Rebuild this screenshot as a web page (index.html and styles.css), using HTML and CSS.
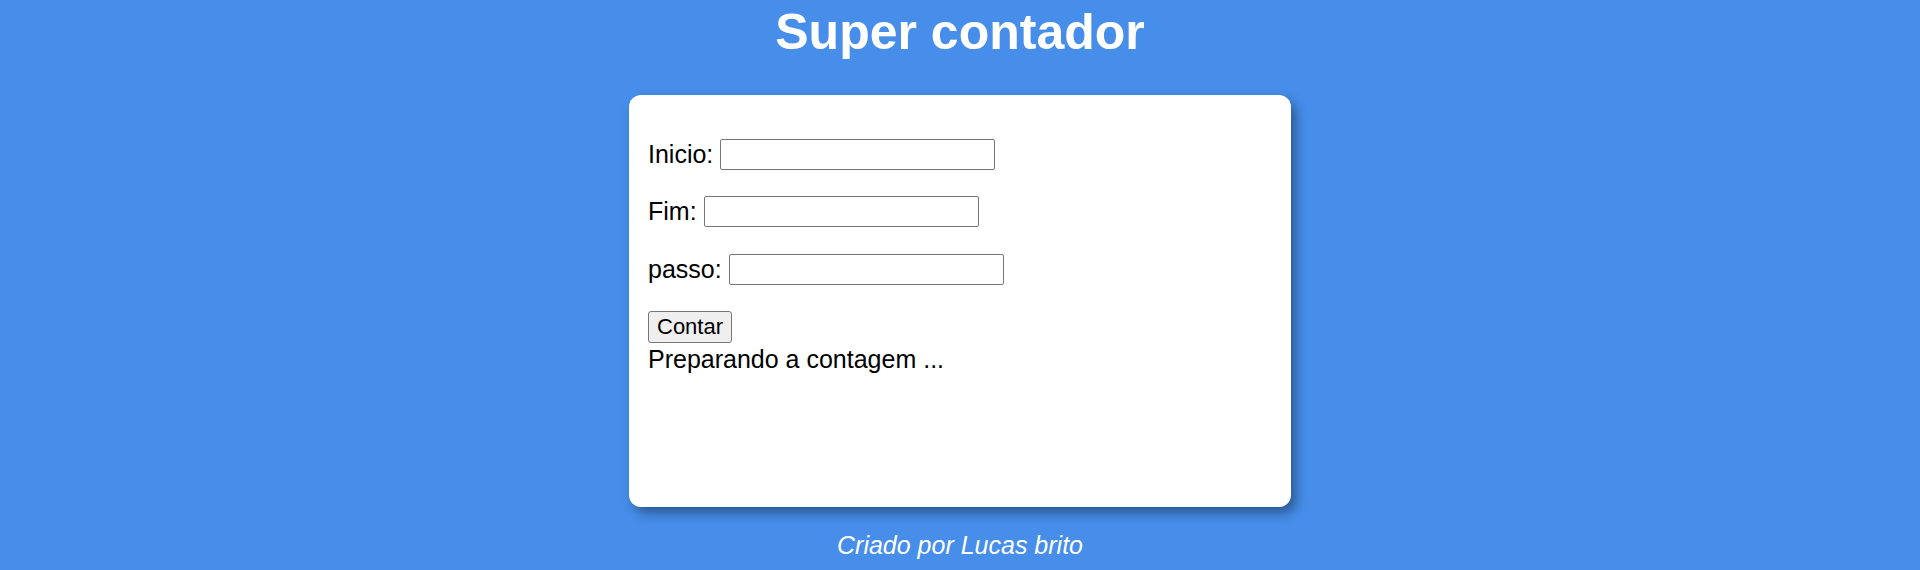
FILE: index.html
```html
<!DOCTYPE html>
<html lang="pt-BR">
<head>
<meta charset="utf-8">
<title>Super contador</title>
<link rel="stylesheet" href="styles.css">
</head>
<body>
<header class="top">
  <h1 class="title">Super contador</h1>
</header>
<main class="card">
  <p class="row"><label for="inicio">Inicio:</label><input type="number" id="inicio" class="field"></p>
  <p class="row"><label for="fim">Fim:</label><input type="number" id="fim" class="field"></p>
  <p class="row"><label for="passo">passo:</label><input type="number" id="passo" class="field"></p>
  <div class="actions"><button type="button" class="btn">Contar</button></div>
  <div class="result">Preparando a contagem ...</div>
</main>
<footer class="foot">
  <p class="credit">Criado por Lucas brito</p>
</footer>
</body>
</html>
```

FILE: styles.css
```css
html, body {
  margin: 0;
  padding: 0;
}
body {
  background: #468eea;
  font-family: "Liberation Sans", Arial, sans-serif;
  font-size: 25px;
  color: #000;
  height: 570px;
  overflow: hidden;
}
.top {
  padding-top: 4px;
}
.title {
  margin: 0;
  text-align: center;
  color: #fff;
  font-size: 50px;
  font-weight: bold;
  line-height: 56px;
}
.card {
  width: 662px;
  height: 412px;
  box-sizing: border-box;
  margin: 35px auto 0;
  background: #fff;
  border-radius: 12px;
  padding: 18px 19px 0;
  box-shadow: 5px 6px 12px rgba(0, 0, 0, 0.38);
}
.row {
  display: flex;
  align-items: center;
  gap: 7px;
  height: 32.5px;
  margin: 25px 0;
}
.field {
  width: 275px;
  height: 31px;
  box-sizing: border-box;
  border: 1px solid #767676;
  border-radius: 2px;
  padding: 1px 3px;
  font-family: "Liberation Sans", Arial, sans-serif;
  font-size: 20px;
  background: #fff;
  -moz-appearance: textfield;
}
.field::-webkit-outer-spin-button,
.field::-webkit-inner-spin-button {
  -webkit-appearance: none;
  margin: 0;
}
.actions {
  margin-top: 24px;
  height: 32px;
}
.btn {
  width: 84px;
  height: 32px;
  box-sizing: border-box;
  padding: 0 8px;
  background: #efefef;
  border: 1px solid #767676;
  border-radius: 3px;
  font-family: "Liberation Sans", Arial, sans-serif;
  font-size: 22px;
  color: #000;
  line-height: 30px;
}
.result {
  padding-top: 1px;
  line-height: 30px;
}
.foot {
  margin-top: 24px;
}
.credit {
  margin: 0;
  text-align: center;
  color: #fff;
  font-style: italic;
  line-height: 29px;
}
```
